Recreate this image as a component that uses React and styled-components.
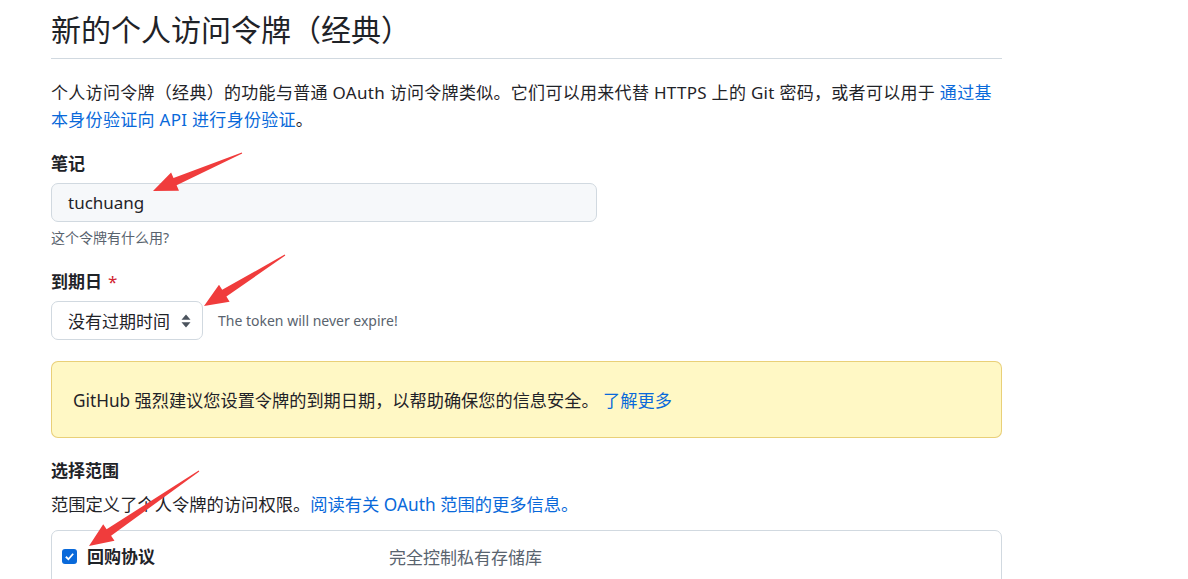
import React from "react";
import styled, { createGlobalStyle } from "styled-components";

const Global = createGlobalStyle`
  html, body { margin: 0; padding: 0; background: #ffffff; }
  body {
    font-family: "Noto Sans", "Noto Sans CJK SC", sans-serif;
    color: #1f2328;
  }
  * { box-sizing: border-box; }
`;

const Page = styled.div`
  position: relative;
  width: 1188px;
  height: 579px;
  overflow: hidden;
  padding: 0 186px 0 51px;
`;

const Header = styled.div`
  border-bottom: 1px solid #d1d9e0;
  padding-top: 8px;
  padding-bottom: 10px;
`;

const Title = styled.h1`
  margin: 0;
  font-size: 30px;
  font-weight: 400;
  line-height: 40px;
  font-family: "Noto Sans CJK SC", sans-serif;
`;

const Text = styled.p`
  margin: ${(p) => p.$m || "0"};
  font-size: ${(p) => p.$size || "17px"};
  line-height: ${(p) => p.$lh || "27px"};
  letter-spacing: ${(p) => p.$ls || "normal"};
  color: ${(p) => (p.$muted ? "#59636e" : "#1f2328")};
`;

const Link = styled.a`
  color: #0969da;
  text-decoration: none;
`;

const Label = styled.div`
  margin-top: ${(p) => p.$mt || "0"};
  font-size: 17px;
  line-height: 24px;
  font-weight: 700;
  display: flex;
  gap: 6px;
`;

const Req = styled.span`
  color: #d1242f;
  font-weight: 400;
`;

const Input = styled.div`
  margin-top: 7px;
  width: 546px;
  height: 39px;
  border: 1px solid #d1d9e0;
  border-radius: 7px;
  background: #f6f8fa;
  padding: 0 16px;
  display: flex;
  align-items: center;
  font-size: 17px;
`;

const SelectRow = styled.div`
  margin-top: 7px;
  display: flex;
  align-items: center;
  gap: 15px;
`;

const Select = styled.div`
  width: 152px;
  height: 39px;
  border: 1px solid #d1d9e0;
  border-radius: 7px;
  background: #ffffff;
  padding: 0 11px 0 16px;
  display: flex;
  align-items: center;
  justify-content: space-between;
  font-size: 17px;
`;

const Flash = styled.div`
  margin-top: 21px;
  height: 77px;
  border: 1px solid rgba(212, 167, 44, 0.5);
  border-radius: 7px;
  background: #fff8c5;
  padding: 0 21px;
  display: flex;
  align-items: center;
  font-size: 17.2px;
`;

const ScopeBox = styled.div`
  margin-top: 12px;
  height: 80px;
  border: 1px solid #d1d9e0;
  border-radius: 7px 7px 0 0;
  padding: 13px 10px;
`;

const ScopeRow = styled.div`
  display: grid;
  grid-template-columns: 327px 1fr;
  align-items: center;
`;

const ScopeName = styled.label`
  display: flex;
  align-items: center;
  gap: 10px;
  font-size: 17px;
  font-weight: 700;
  line-height: 24px;
`;

const Check = styled.span`
  width: 15px;
  height: 15px;
  border-radius: 3px;
  background: #0969da;
  display: inline-flex;
  align-items: center;
  justify-content: center;
`;

const ScopeDesc = styled.span`
  color: #59636e;
  font-size: 17px;
`;

const Overlay = styled.svg`
  position: absolute;
  left: 0;
  top: 0;
  pointer-events: none;
`;

function arrowPoints(tx, ty, hx, hy) {
  const dx = hx - tx;
  const dy = hy - ty;
  const len = Math.hypot(dx, dy);
  const ux = dx / len;
  const uy = dy / len;
  const nx = -uy;
  const ny = ux;
  const headLen = 24;
  const headW = 10;
  const shaftW = 4;
  const bx = hx - ux * headLen;
  const by = hy - uy * headLen;
  const pts = [
    [tx + nx * 0.5, ty + ny * 0.5],
    [bx + nx * shaftW, by + ny * shaftW],
    [bx + nx * headW, by + ny * headW],
    [hx, hy],
    [bx - nx * headW, by - ny * headW],
    [bx - nx * shaftW, by - ny * shaftW],
    [tx - nx * 0.5, ty - ny * 0.5],
  ];
  return pts.map((p) => p.map((v) => v.toFixed(1)).join(",")).join(" ");
}

const arrows = [
  { t: [242, 153], h: [153, 191] },
  { t: [285, 255], h: [204, 306] },
  { t: [199, 471], h: [89, 546] },
];

export default function App() {
  return (
    <Page>
      <Global />
      <Header>
        <Title>新的个人访问令牌（经典）</Title>
      </Header>
      <Text $m="20px 0 0" $ls="0.3px">
        个人访问令牌（经典）的功能与普通 OAuth 访问令牌类似。它们可以用来代替 HTTPS 上的 Git 密码，或者可以用于{" "}
        <Link>通过基本身份验证向 API 进行身份验证</Link>。
      </Text>
      <Label $mt="19px">笔记</Label>
      <Input>tuchuang</Input>
      <Text $m="6px 0 0" $size="14px" $lh="19px" $muted>
        这个令牌有什么用?
      </Text>
      <Label $mt="23px">
        到期日 <Req>*</Req>
      </Label>
      <SelectRow>
        <Select>
          <span>没有过期时间</span>
          <svg width="10" height="14" viewBox="0 0 10 14">
            <path d="M5 0.5 L9.5 5.8 H0.5 Z M5 13.5 L9.5 8.2 H0.5 Z" fill="#4b535d" />
          </svg>
        </Select>
        <Text $size="14px" $muted>
          The token will never expire!
        </Text>
      </SelectRow>
      <Flash>
        <span>
          GitHub 强烈建议您设置令牌的到期日期，以帮助确保您的信息安全。 <Link>了解更多</Link>
        </span>
      </Flash>
      <Label $mt="21px">选择范围</Label>
      <Text $m="8px 0 0" $size="17.3px">
        范围定义了个人令牌的访问权限。<Link>阅读有关 OAuth 范围的更多信息。</Link>
      </Text>
      <ScopeBox>
        <ScopeRow>
          <ScopeName>
            <Check>
              <svg width="11" height="11" viewBox="0 0 12 12">
                <path d="M2 6.3 L4.8 9 L10 3" stroke="#fff" strokeWidth="2" fill="none" />
              </svg>
            </Check>
            回购协议
          </ScopeName>
          <ScopeDesc>完全控制私有存储库</ScopeDesc>
        </ScopeRow>
      </ScopeBox>
      <Overlay width="1188" height="579" viewBox="0 0 1188 579">
        {arrows.map((a, i) => (
          <polygon key={i} points={arrowPoints(a.t[0], a.t[1], a.h[0], a.h[1])} fill="#f03c3c" />
        ))}
      </Overlay>
    </Page>
  );
}
